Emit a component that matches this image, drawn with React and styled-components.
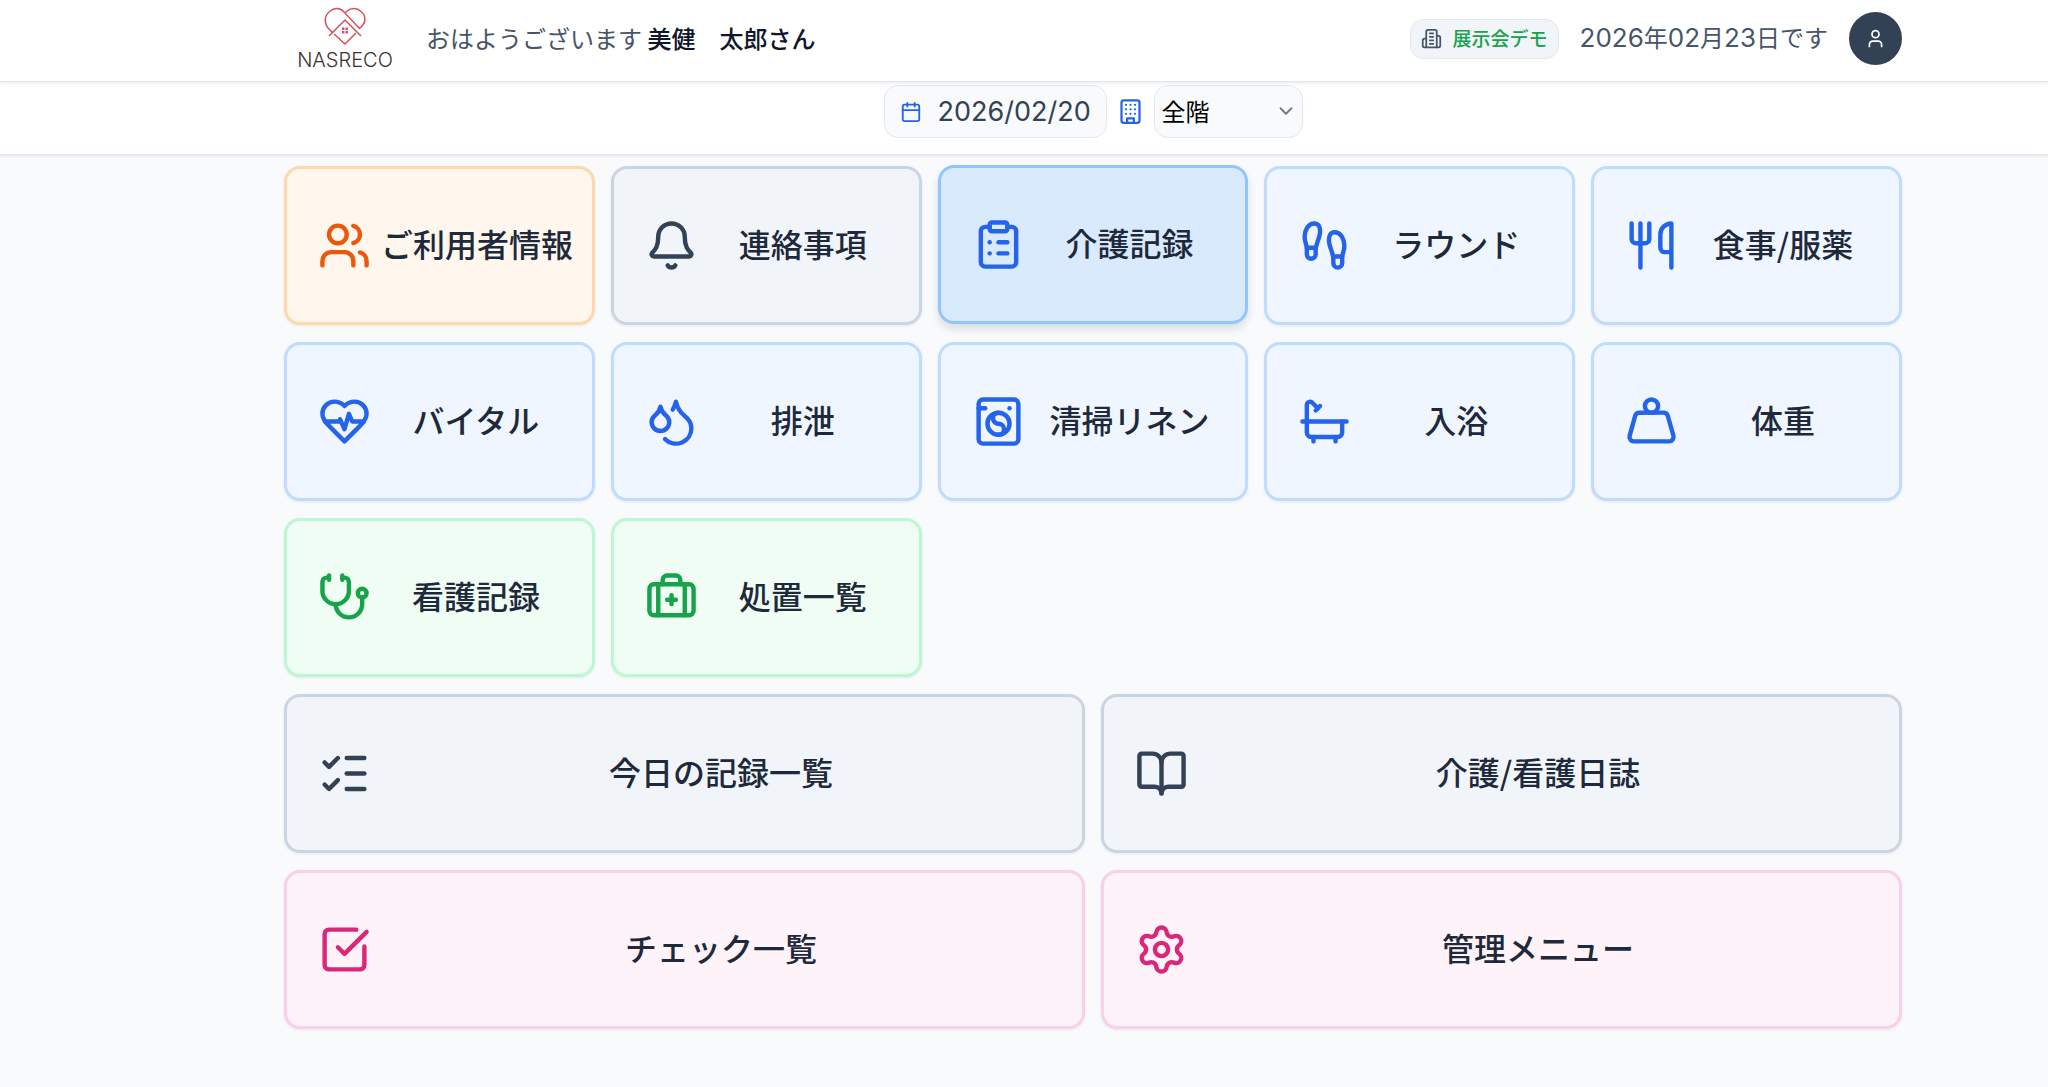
import React from 'react';
import styled, { createGlobalStyle } from 'styled-components';
import {
    Users,
    Bell,
    ClipboardList,
    Footprints,
    Utensils,
    Droplets,
    WashingMachine,
    Weight,
    Stethoscope,
    BriefcaseMedical,
    ListChecks,
    BookOpen,
    SquareCheckBig,
    Settings,
    User,
    Calendar,
    ChevronDown,
} from 'lucide-react';

const LineIcon = ({ size = 24, children }) => (
    <svg width={size} height={size} viewBox="0 0 24 24" fill="none" stroke="currentColor" strokeWidth="2" strokeLinecap="round" strokeLinejoin="round" aria-hidden="true">
        {children}
    </svg>
);

const HeartPulseIcon = ({ size }) => (
    <LineIcon size={size}>
        <path d="M19 14c1.490-1.460 3-3.210 3-5.500A5.500 5.500 0 0 0 16.500 3c-1.760 0-3 .5-4.500 2-1.500-1.500-2.740-2-4.500-2A5.500 5.500 0 0 0 2 8.500c0 2.300 1.500 4.050 3 5.500l7 7Z" />
        <path d="M3.220 12H9.500l.5-1 2 4.500 2-7 1.500 3.500h5.270" />
    </LineIcon>
);

const BathIcon = ({ size }) => (
    <LineIcon size={size}>
        <path d="M9 6 6.500 3.500a1.500 1.500 0 0 0-1-.5C4.683 3 4 3.683 4 4.500V17a2 2 0 0 0 2 2h12a2 2 0 0 0 2-2v-5" />
        <path d="M10 5 8 7M2 12h20M7 19v2M17 19v2" />
    </LineIcon>
);

const OfficeIcon = ({ size }) => (
    <LineIcon size={size}>
        <path d="M6 22V4a2 2 0 0 1 2-2h8a2 2 0 0 1 2 2v18Z" />
        <path d="M6 12H4a2 2 0 0 0-2 2v6a2 2 0 0 0 2 2h2" />
        <path d="M18 9h2a2 2 0 0 1 2 2v9a2 2 0 0 1-2 2h-2" />
        <path d="M10 6h4M10 10h4M10 14h4M10 18h4" />
    </LineIcon>
);

const FloorIcon = ({ size }) => (
    <LineIcon size={size}>
        <rect width="16" height="20" x="4" y="2" rx="2" />
        <path d="M9 22v-4h6v4" />
        <path d="M8 6h.01M12 6h.01M16 6h.01M8 10h.01M12 10h.01M16 10h.01M8 14h.01M12 14h.01M16 14h.01" />
    </LineIcon>
);

const LogoMark = () => (
    <svg width="42" height="38" viewBox="-1 -1 42 38" fill="none" stroke="#d9515f" strokeWidth="1.5" aria-hidden="true">
        <path d="M8 25 3.500 20.500C-1 15.500-1 8 4.500 3.500 9-.5 15-.5 18.500 3.500L34.500 20.500 37 18C41 14 41 7.500 36 3.500 32-.5 26-.5 22 3L20 5" />
        <path d="M4 28 20 12 36 28" />
        <path d="M9 26 20 36 31 25" />
        <path d="M17 19.500h2.500V22H17zM20.500 19.500H23V22h-2.500zM17 23h2.500v2.500H17zM20.500 23H23v2.500h-2.500z" fill="#d9515f" stroke="none" />
    </svg>
);

const TONES = {
    orange: { bg: '#fff7ed', border: '#fed7aa', icon: '#ea580c' },
    slate: { bg: '#f1f5f9', border: '#cbd5e1', icon: '#334155' },
    blue: { bg: '#eff6ff', border: '#bfdbfe', icon: '#2563eb' },
    blueActive: { bg: '#daeafd', border: '#93c5fd', icon: '#2563eb' },
    green: { bg: '#f0fdf4', border: '#bbf7d0', icon: '#16a34a' },
    pink: { bg: '#fef3f9', border: '#fbcfe8', icon: '#db2777' },
};

const RECORD_MENU = [
    { label: 'ご利用者情報', icon: Users, tone: 'orange' },
    { label: '連絡事項', icon: Bell, tone: 'slate' },
    { label: '介護記録', icon: ClipboardList, tone: 'blueActive', active: true },
    { label: 'ラウンド', icon: Footprints, tone: 'blue' },
    { label: '食事/服薬', icon: Utensils, tone: 'blue' },
    { label: 'バイタル', icon: HeartPulseIcon, tone: 'blue' },
    { label: '排泄', icon: Droplets, tone: 'blue' },
    { label: '清掃リネン', icon: WashingMachine, tone: 'blue' },
    { label: '入浴', icon: BathIcon, tone: 'blue' },
    { label: '体重', icon: Weight, tone: 'blue' },
    { label: '看護記録', icon: Stethoscope, tone: 'green' },
    { label: '処置一覧', icon: BriefcaseMedical, tone: 'green' },
];

const SUMMARY_MENU = [
    { label: '今日の記録一覧', icon: ListChecks, tone: 'slate' },
    { label: '介護/看護日誌', icon: BookOpen, tone: 'slate' },
    { label: 'チェック一覧', icon: SquareCheckBig, tone: 'pink' },
    { label: '管理メニュー', icon: Settings, tone: 'pink' },
];

const MenuCard = ({ label, icon: Icon, tone, active }) => (
    <Card type="button" $tone={TONES[tone]} $active={active}>
        <Icon size={53} />
        <CardLabel>{label}</CardLabel>
    </Card>
);

const App = () => {
    return (
        <>
        <GlobalStyle />
        <PageDiv>
            <HeaderBar>
                <HeaderContent>
                    <LogoLink href="#">
                        <LogoMark />
                        <LogoText>NASRECO</LogoText>
                    </LogoLink>
                    <Greeting>おはようございます <UserName>美健　太郎さん</UserName></Greeting>

                    <HeaderRight>
                        <FacilityBadge>
                            <OfficeIcon size={21} />
                            <FacilityName>展示会デモ</FacilityName>
                        </FacilityBadge>
                        <Today><Num>2026</Num>年<Num>02</Num>月<Num>23</Num>日です</Today>
                        <AvatarButton type="button" aria-label="アカウント">
                            <User size={21} />
                        </AvatarButton>
                    </HeaderRight>
                </HeaderContent>
            </HeaderBar>

            <FilterBar>
                <DateField>
                    <Calendar size={22} />
                    <DateInput type="text" aria-label="日付" defaultValue="2026/02/20" />
                </DateField>
                <FloorLabel htmlFor="floor" aria-label="階"><FloorIcon size={27} /></FloorLabel>
                <SelectWrap>
                    <FloorSelect id="floor" defaultValue="all">
                        <option value="all">全階</option>
                    </FloorSelect>
                    <SelectArrow size={22} strokeWidth={2} />
                </SelectWrap>
            </FilterBar>

            <MenuArea>
                <RecordGrid>
                    {RECORD_MENU.map((item) => <MenuCard key={item.label} {...item} />)}
                </RecordGrid>
                <SummaryGrid>
                    {SUMMARY_MENU.map((item) => <MenuCard key={item.label} {...item} />)}
                </SummaryGrid>
            </MenuArea>
        </PageDiv>
        </>
    );
};

const GlobalStyle = createGlobalStyle`
* {
box-sizing: border-box;
}
body {
margin: 0;
background-color: #f8fafc;
color: #1e293b;
font-family: "Noto Sans CJK JP", sans-serif;
}
button, input, select {
font-family: inherit;
}
`;

const PageDiv=styled.div`
display: flex;
flex-direction: column;
min-height: 100vh;
`;

const HeaderBar=styled.header`
position: relative;
z-index: 1;
padding: 0 16px 0 154px;
background-color: white;
border-bottom: 1px solid #e2e8f0;
box-shadow: 0 1px 3px rgba(15, 23, 42, 0.1);
`;

const HeaderContent=styled.div`
display: flex;
align-items: center;
max-width: 1618px;
min-height: 81px;
margin: 0 auto;
padding: 0 0 4px 12px;
`;

const LogoLink=styled.a`
display: flex;
flex-direction: column;
align-items: center;
gap: 5px;
width: 98px;
text-decoration: none;
`;

const LogoText=styled.span`
color: #3b3032;
font-family: Inter, sans-serif;
font-size: 20px;
font-weight: 300;
line-height: 20px;
`;

const Greeting=styled.p`
margin: 0 0 0 32px;
padding-bottom: 2px;
color: #475569;
font-size: 24px;
line-height: 32px;
white-space: nowrap;
`;

const UserName=styled.span`
color: #0f172a;
font-weight: 500;
`;

const HeaderRight=styled.div`
display: flex;
align-items: center;
gap: 21px;
margin-left: auto;
`;

const FacilityBadge=styled.div`
display: flex;
align-items: center;
gap: 11px;
height: 40px;
padding: 0 10px;
background-color: #f1f5f9;
border: 1px solid #e2e8f0;
border-radius: 13px;
color: #475569;
`;

const FacilityName=styled.span`
padding-bottom: 2px;
color: #16a34a;
font-size: 19px;
font-weight: 500;
line-height: 24px;
white-space: nowrap;
`;

const Today=styled.span`
padding-bottom: 2px;
color: #475569;
font-size: 24px;
line-height: 32px;
white-space: nowrap;
`;

const Num=styled.span`
font-family: Inter, sans-serif;
font-size: 26px;
`;

const AvatarButton=styled.button`
display: flex;
align-items: center;
justify-content: center;
width: 53px;
height: 53px;
padding: 0;
background-color: #334155;
border: none;
border-radius: 50%;
color: white;
cursor: pointer;
`;

const FilterBar=styled.div`
display: flex;
align-items: center;
justify-content: center;
gap: 10px;
padding: 3px 16px 16px 154px;
background-color: white;
border-bottom: 1px solid #e2e8f0;
box-shadow: 0 1px 3px rgba(15, 23, 42, 0.1);
`;

const DateField=styled.label`
display: flex;
align-items: center;
gap: 16px;
width: 223px;
height: 53px;
padding: 0 15px;
background-color: #f8fafc;
border: 1px solid #e2e8f0;
border-radius: 14px;
color: #2563eb;
`;

const DateInput=styled.input`
flex: 1;
min-width: 0;
padding: 0;
background: transparent;
border: none;
outline: none;
color: #334155;
font-family: Inter, sans-serif;
font-size: 27px;
`;

const FloorLabel=styled.label`
display: flex;
color: #2563eb;
`;

const SelectWrap=styled.div`
position: relative;
width: 149px;
`;

const FloorSelect=styled.select`
display: block;
width: 100%;
height: 53px;
padding: 0 32px 2px 7px;
appearance: none;
background-color: #f8fafc;
border: 1px solid #e2e8f0;
border-radius: 14px;
color: black;
font-size: 24px;
`;

const SelectArrow=styled(ChevronDown)`
position: absolute;
top: 15px;
right: 6px;
color: #777777;
pointer-events: none;
`;

const MenuArea=styled.main`
display: flex;
flex-direction: column;
gap: 17px;
padding: 11px 16px 32px 154px;
`;

const RecordGrid=styled.div`
display: grid;
grid-template-columns: repeat(5, 1fr);
gap: 17px 16px;
width: 100%;
max-width: 1618px;
margin: 0 auto;
`;

const SummaryGrid=styled(RecordGrid)`
grid-template-columns: repeat(2, 1fr);
`;

const Card=styled.button`
display: flex;
align-items: center;
gap: 10px;
min-width: 0;
height: 159px;
padding: 0 21px 0 31px;
background-color: ${({ $tone }) => $tone.bg};
border: 3px solid ${({ $tone }) => $tone.border};
border-radius: 16px;
box-shadow: ${({ $active }) => $active ? '0 5px 8px rgba(15, 23, 42, 0.12)' : '0 1px 3px rgba(15, 23, 42, 0.08)'};
transform: ${({ $active }) => $active ? 'translateY(-1px)' : 'none'};
cursor: pointer;

svg {
flex-shrink: 0;
color: ${({ $tone }) => $tone.icon};
}
`;

const CardLabel=styled.span`
flex: 1;
min-width: 0;
padding-bottom: 5px;
color: #1e293b;
font-size: 32px;
font-weight: 500;
line-height: 40px;
text-align: center;
white-space: nowrap;
`;

export default App;
